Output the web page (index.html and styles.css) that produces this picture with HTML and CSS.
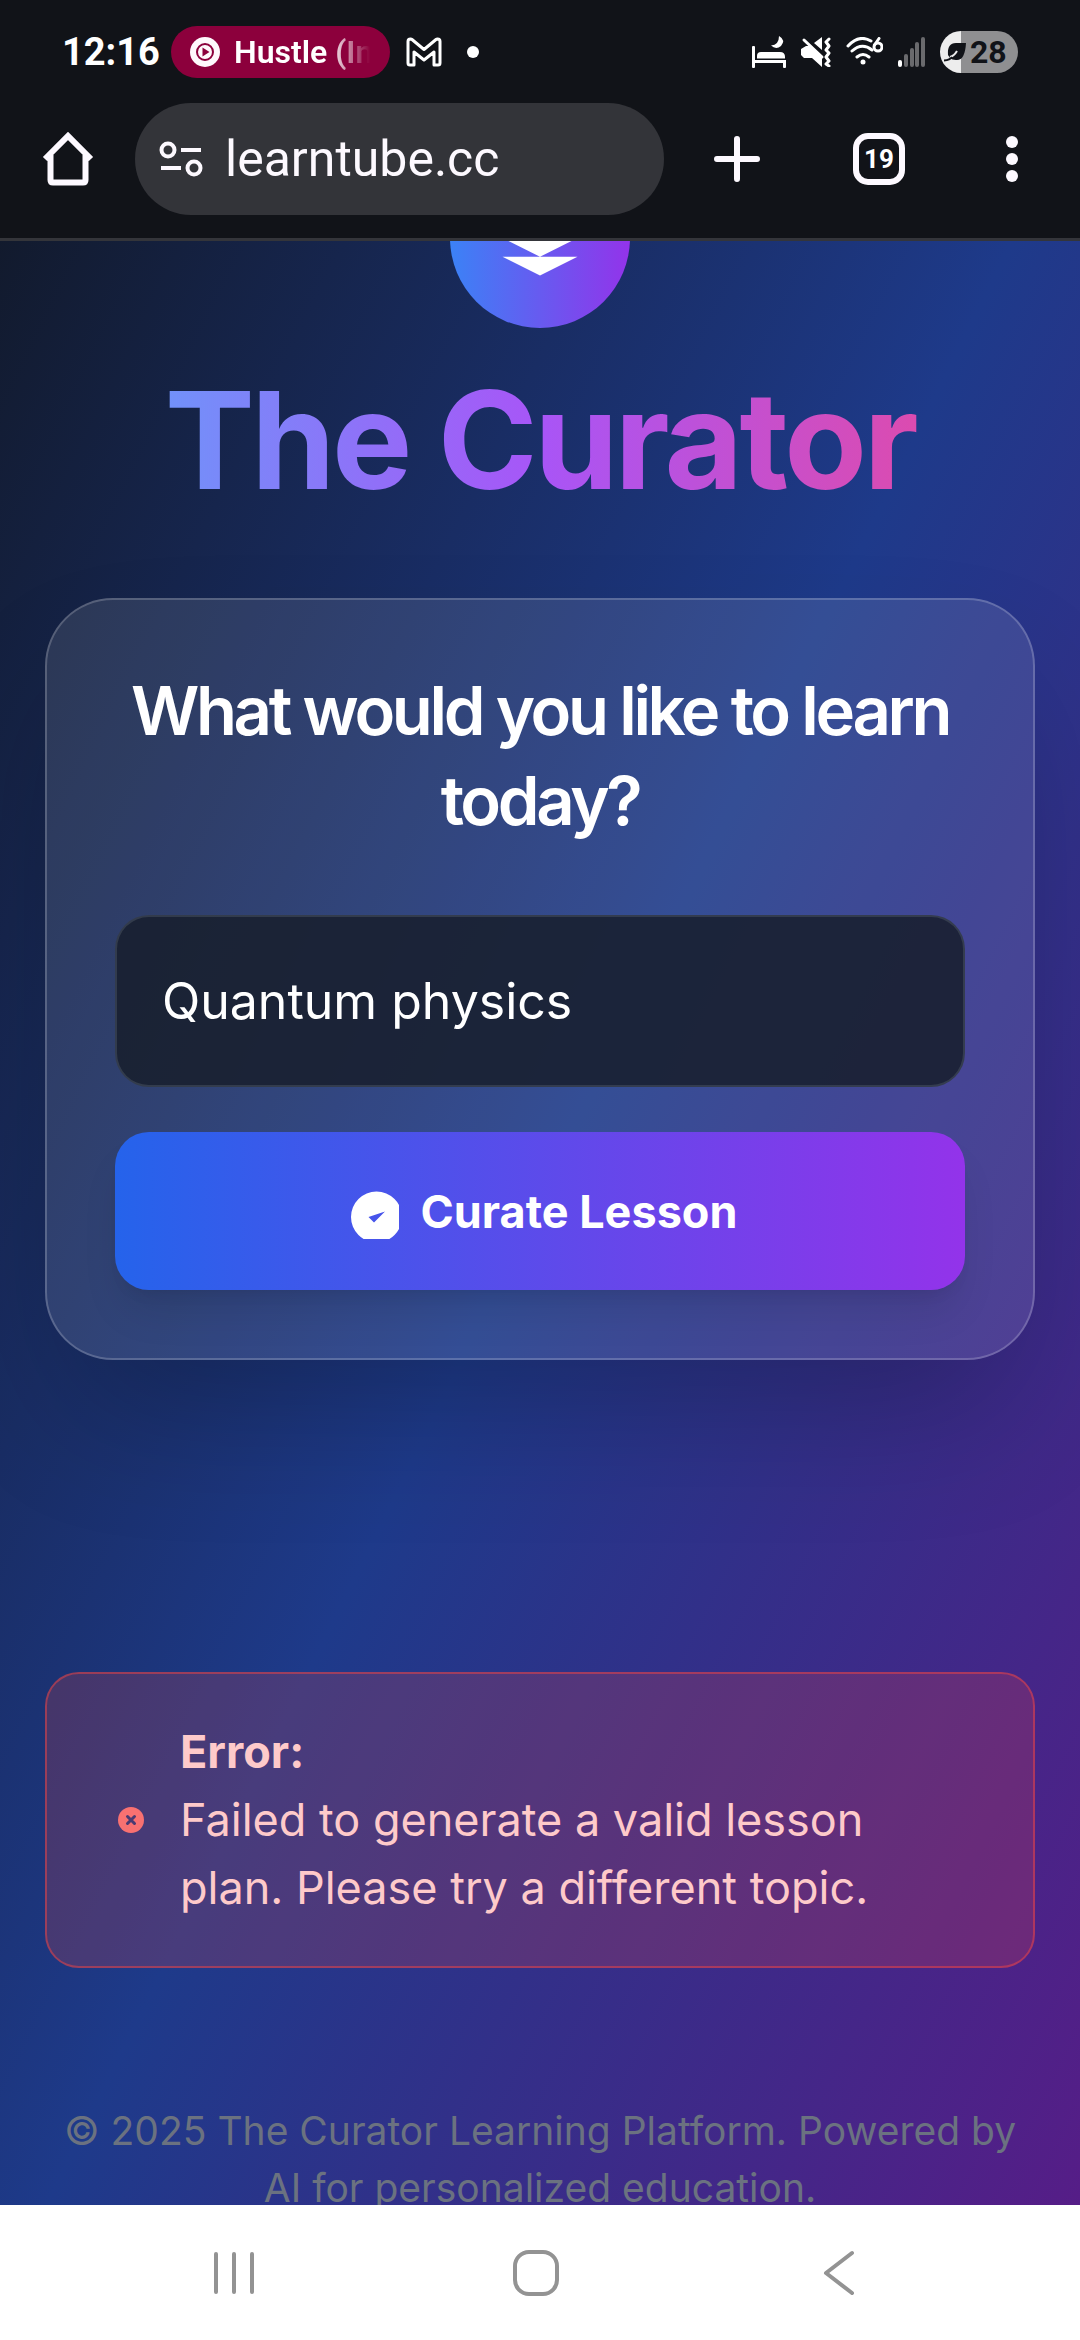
FILE: index.html
```html
<!DOCTYPE html>
<html lang="en">
<head>
  <meta charset="utf-8">
  <meta name="viewport" content="width=device-width, initial-scale=1">
  <title>The Curator</title>
  <link rel="stylesheet" href="styles.css">
</head>
<body>
  <header class="chrome">
    <div class="status">
      <div class="status-left">
        <span class="clock">12:16</span>
        <span class="media">
          <svg width="30" height="32" viewBox="0 0 30 32" aria-hidden="true">
            <circle cx="15" cy="16" r="15" fill="#fff8fc"/>
            <circle cx="15" cy="16" r="8" fill="#fff8fc" stroke="#8c003c" stroke-width="2"/>
            <path d="M12.500 11.500v9l7-4.500z" fill="#8c003c"/>
          </svg>
          <span class="media-title">Hustle (In</span>
        </span>
        <svg width="36" height="30" viewBox="0 0 36 30" aria-hidden="true">
          <path d="M2 4.500Q2 2 4.500 2L6 2.500 18 12.500 30 2.500 31.500 2Q34 2 34 4.500V26Q34 28 32 28H28V15L18 23 8 15V28H4Q2 28 2 26Z" fill="none" stroke="#fff" stroke-width="3" stroke-linejoin="round"/>
        </svg>
        <svg width="30" height="30" viewBox="0 0 30 30" aria-hidden="true"><circle cx="15" cy="15" r="6" fill="#fff"/></svg>
      </div>
      <div class="status-right">
        <svg width="34" height="32" viewBox="0 0 34 32" aria-hidden="true" fill="#fff">
          <rect x="0" y="10" width="3" height="22" rx="1"/>
          <rect x="0" y="24" width="34" height="3"/>
          <rect x="31" y="24" width="3" height="8" rx="1"/>
          <path d="M5 22.500V20Q5 16 9 16H28Q33 16 33 21V22.500Z"/>
          <path d="M27 0Q34 4 29 10Q24 14 19 9.500Q27 9 27 0Z"/>
        </svg>
        <svg width="30" height="30" viewBox="0 0 30 30" aria-hidden="true">
          <path d="M0 12L5 9H8L21 20V30L11 21H3L0 18V12ZM13 6L21 0V13Z" fill="#fff"/>
          <path d="M3 3L21 20" stroke="#fff" stroke-width="3" stroke-linecap="round"/>
          <path d="M28 2L25 5 28 9 25 13 28 16 25 20 28 24 25 27 28 29" fill="none" stroke="#fff" stroke-width="3" stroke-linecap="round" stroke-linejoin="round"/>
        </svg>
        <svg width="37" height="30" viewBox="0 0 37 30" aria-hidden="true" fill="none" stroke="#fff" stroke-width="3" stroke-linecap="round">
          <path d="M2 9Q13 -3 25 4M6 14Q16 5 26 13M11 20Q17 15 23 20"/>
          <circle cx="17" cy="25" r="2.500" fill="#fff" stroke="none"/>
          <circle cx="32" cy="10" r="4"/><path d="M28.500 8L33 1.500"/>
        </svg>
        <svg width="27" height="30" viewBox="0 0 27 30" aria-hidden="true" fill="#6a6a6d">
          <rect x="0" y="23" width="4" height="7" rx="2" fill="#fff"/>
          <rect x="6" y="17" width="4" height="13" rx="2"/>
          <rect x="12" y="11" width="4" height="19" rx="2"/>
          <rect x="17" y="5" width="4" height="25" rx="2"/>
          <rect x="23" y="0" width="4" height="30" rx="2"/>
        </svg>
        <span class="battery">
          <svg width="22" height="20" viewBox="0 0 22 20" aria-hidden="true">
            <path d="M4 13Q3 1 12 1H22Q21 19 12 18 8 18 6 16Z" fill="#111318"/>
            <path d="M6 15Q10 14 13 9" fill="none" stroke="#ededed" stroke-width="2"/>
            <path d="M0 18.500Q6 18 8 15" fill="none" stroke="#111318" stroke-width="2"/>
          </svg>
          <span>28</span>
        </span>
      </div>
    </div>

    <div class="toolbar">
      <button class="tool" type="button" aria-label="Home">
        <svg width="52" height="54" viewBox="0 0 52 54" aria-hidden="true">
          <path d="M3 27L26 4 49 27M8.500 23V48Q8.500 50.500 11 50.500H41Q43.500 50.500 43.500 48V23" fill="none" stroke="#fdf9ff" stroke-width="6" stroke-linejoin="miter"/>
        </svg>
      </button>
      <div class="omnibox">
        <svg width="44" height="38" viewBox="0 0 44 38" aria-hidden="true" fill="none" stroke="#fdf9ff" stroke-width="4">
          <circle cx="9" cy="10" r="6.500"/><path d="M22 10H42M2 28H22"/><circle cx="35" cy="28" r="6.500"/>
        </svg>
        <input class="address" type="text" aria-label="Address" value="learntube.cc">
      </div>
      <div class="tools">
        <button class="tool" type="button" aria-label="New tab">
          <svg width="46" height="46" viewBox="0 0 46 46" aria-hidden="true"><path d="M23 3V43M3 23H43" stroke="#fdf9ff" stroke-width="6" stroke-linecap="round"/></svg>
        </button>
        <button class="tool" type="button" aria-label="Tabs"><span class="tab-count">19</span></button>
        <button class="tool" type="button" aria-label="Menu">
          <svg width="12" height="46" viewBox="0 0 12 46" aria-hidden="true" fill="#fdf9ff"><circle cx="6" cy="6" r="6"/><circle cx="6" cy="23" r="6"/><circle cx="6" cy="40" r="6"/></svg>
        </button>
      </div>
    </div>
  </header>

  <div class="viewport">
    <div class="page">
      <div class="logo">
        <svg width="90" height="90" viewBox="0 0 24 24" fill="#fff" aria-hidden="true"><path d="M12 2L2 7l10 5 10-5-10-5zM2 17l10 5 10-5M2 12l10 5 10-5"/></svg>
      </div>
      <h1 class="title">The Curator</h1>

      <main class="card">
        <h2 class="question"><label for="topic">What would you like to learn today?</label></h2>
        <input class="topic" id="topic" type="text" value="Quantum physics">
        <button class="curate" type="button">
          <svg width="56" height="56" viewBox="0 0 56 56" aria-hidden="true"><path fill="#fff" fill-rule="evenodd" d="M8 34a25.500 25.500 0 1 1 51 0a25.500 25.500 0 1 1-51 0zM25.500 34L42 28.500 31 39.500z"/></svg>
          Curate Lesson
        </button>
      </main>

      <section class="alert" role="alert">
        <svg class="alert-icon" width="34" height="34" viewBox="0 0 34 34" aria-hidden="true">
          <circle cx="17" cy="17" r="13" fill="#f87171"/>
          <path d="M13.500 13.500l7 7M20.500 13.500l-7 7" stroke="#4a3a72" stroke-width="3" stroke-linecap="round"/>
        </svg>
        <div>
          <strong class="alert-title">Error:</strong>
          <p class="alert-text">Failed to generate a valid lesson plan. Please try a different topic.</p>
        </div>
      </section>

      <footer class="footer">© 2025 The Curator Learning Platform. Powered by AI for personalized education.</footer>
    </div>
  </div>

  <nav class="navbar" aria-label="System">
    <button class="nav-button" type="button" aria-label="Recents">
      <svg width="46" height="46" viewBox="0 0 46 46" aria-hidden="true"><path d="M5 4V42M23 4V42M41 4V42" stroke="#939393" stroke-width="4" stroke-linecap="round"/></svg>
    </button>
    <button class="nav-button" type="button" aria-label="Home screen">
      <svg width="46" height="46" viewBox="0 0 46 46" aria-hidden="true"><rect x="2" y="2" width="42" height="42" rx="14" fill="none" stroke="#939393" stroke-width="4"/></svg>
    </button>
    <button class="nav-button" type="button" aria-label="Back">
      <svg width="46" height="46" viewBox="0 0 46 46" aria-hidden="true"><path d="M37 3L11 23 37 43" fill="none" stroke="#939393" stroke-width="4" stroke-linecap="round" stroke-linejoin="round"/></svg>
    </button>
  </nav>
</body>
</html>
```

FILE: styles.css
```css
* { box-sizing: border-box; }

body {
  margin: 0;
  height: 100vh;
  display: flex;
  flex-direction: column;
  overflow: hidden;
  font-family: Inter, "Liberation Sans", sans-serif;
  color: #fff;
}

button, input {
  font: inherit;
  color: inherit;
  border: 0;
  background: none;
  padding: 0;
  margin: 0;
}

svg { display: block; flex: none; }

/* Browser chrome */
.chrome {
  flex: none;
  background: #111318;
  border-bottom: 3px solid #34353a;
  padding-bottom: 23px;
  font-family: Roboto, "Liberation Sans", sans-serif;
}

.status {
  display: flex;
  justify-content: space-between;
  height: 103px;
  padding: 0 62px;
}

.status-left, .status-right {
  display: flex;
  align-items: center;
  gap: 16px;
}

.status-right { gap: 15px; }

.clock {
  width: 93px;
  font-size: 38px;
  font-weight: 700;
  white-space: nowrap;
}

.media {
  display: flex;
  align-items: center;
  gap: 14px;
  width: 219px;
  height: 52px;
  padding: 0 20px 0 19px;
  border-radius: 26px;
  background: #8c003c;
}

.media-title {
  overflow: hidden;
  font-size: 32px;
  font-weight: 600;
  white-space: nowrap;
  -webkit-mask-image: linear-gradient(to right, #000 70%, transparent);
  mask-image: linear-gradient(to right, #000 70%, transparent);
}

.battery {
  display: flex;
  align-items: center;
  gap: 4px;
  width: 78px;
  height: 42px;
  padding-left: 4px;
  border-radius: 21px;
  background: linear-gradient(to right, #ededed 21px, #8f8f91 21px);
  color: #111318;
  font-size: 32px;
  font-weight: 700;
}

.toolbar {
  display: flex;
  align-items: center;
  padding: 0 4px 0 42px;
}

.tool {
  display: flex;
  align-items: center;
  justify-content: center;
}

.omnibox {
  flex: 1;
  min-width: 0;
  display: flex;
  align-items: center;
  gap: 22px;
  height: 112px;
  margin-left: 41px;
  padding: 0 24px;
  border-radius: 56px;
  background: #333439;
  color: #fdf9ff;
}

.address {
  flex: 1;
  min-width: 0;
  font-size: 50px;
}

.tools {
  display: grid;
  grid-template-columns: 146px 138px 128px;
  align-items: center;
}

.tab-count {
  display: flex;
  align-items: center;
  justify-content: center;
  width: 52px;
  height: 52px;
  border: 6px solid #fdf9ff;
  border-radius: 15px;
  font-size: 26px;
  font-weight: 700;
}

/* Web page, scrolled down under the chrome */
.viewport {
  flex: 1;
  min-height: 0;
  overflow: hidden;
}

.page {
  margin-top: -138px;
  padding: 45px 45px 84px;
  background: linear-gradient(to bottom right, #111827, #1e3a8a, #581c87);
}

.logo {
  display: flex;
  align-items: center;
  justify-content: center;
  width: 180px;
  height: 180px;
  margin: 0 auto;
  border-radius: 50%;
  background: linear-gradient(to right, #3b82f6, #9333ea);
}

.title {
  margin: 45px 0 90px;
  font-size: 135px;
  line-height: 135px;
  font-weight: 700;
  letter-spacing: -0.025em;
  text-align: center;
  background: linear-gradient(to right, #60a5fa, #a855f7, #ec4899);
  -webkit-background-clip: text;
  background-clip: text;
  color: transparent;
}

.card {
  display: flex;
  flex-direction: column;
  gap: 45px;
  padding: 66px 68px 68px;
  border: 2px solid rgba(255, 255, 255, 0.2);
  border-radius: 68px;
  background: rgba(255, 255, 255, 0.1);
  box-shadow: 0 70px 140px -34px rgba(0, 0, 0, 0.25);
}

.question {
  margin: 0 0 24px;
  font-size: 67px;
  line-height: 90px;
  font-weight: 600;
  letter-spacing: -0.05em;
  text-align: center;
}

.topic {
  width: 100%;
  height: 172px;
  padding: 0 45px;
  border: 2px solid rgba(75, 85, 99, 0.5);
  border-radius: 34px;
  background: rgba(24, 31, 46, 0.88);
  font-size: 50px;
}

.curate {
  display: flex;
  align-items: center;
  justify-content: center;
  gap: 22px;
  height: 158px;
  border-radius: 34px;
  background: linear-gradient(to right, #2563eb, #9333ea);
  box-shadow: 0 28px 42px -8px rgba(0, 0, 0, 0.1), 0 11px 17px -11px rgba(0, 0, 0, 0.1);
  font-size: 45px;
  font-weight: 700;
}

.alert {
  display: flex;
  align-items: center;
  gap: 32px;
  margin-top: 312px;
  padding: 44px 67px;
  border: 2px solid rgba(239, 68, 68, 0.5);
  border-radius: 34px;
  background: rgba(239, 68, 68, 0.2);
  color: #fecaca;
  font-size: 45px;
  line-height: 68px;
}

.alert-title { display: block; font-weight: 700; }

.alert-text { margin: 0; }

.footer {
  margin-top: 134px;
  color: #6b7280;
  font-size: 39px;
  line-height: 57px;
  text-align: center;
}

/* System navigation */
.navbar {
  flex: none;
  display: grid;
  grid-template-columns: repeat(3, 302px);
  justify-content: center;
  align-items: center;
  height: 135px;
  padding-right: 8px;
  background: #fff;
}

.nav-button {
  display: flex;
  align-items: center;
  justify-content: center;
}
```
